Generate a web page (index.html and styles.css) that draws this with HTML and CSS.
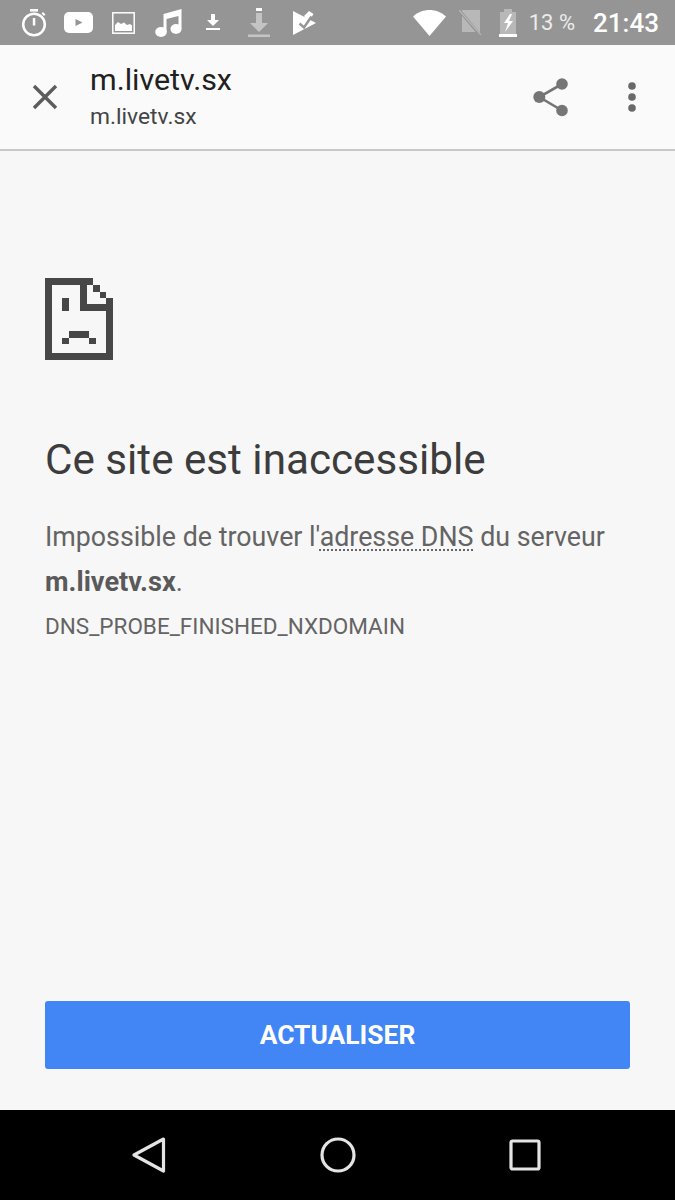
FILE: index.html
```html
<!DOCTYPE html>
<html lang="fr">
<head>
<meta charset="utf-8">
<title>m.livetv.sx</title>
<link rel="stylesheet" href="styles.css">
</head>
<body>
<div class="phone">
  <header class="status">
    <div class="status-left">
      <svg class="si i-timer" width="26" height="28" viewBox="0 0 26 28"><circle cx="13" cy="15.500" r="10.800" fill="none" stroke="#fff" stroke-width="2.500"/><rect x="9" y="0" width="8" height="2.600" fill="#fff"/><rect x="11.800" y="9" width="2.500" height="7.500" fill="#fff"/><path d="M22 3l2.500 2.500-1.500 1.500-2.500-2.500z" fill="#fff"/></svg>
      <svg class="si i-yt" width="29" height="21" viewBox="0 0 29 21"><rect width="29" height="21" rx="5" fill="#fff"/><path d="M11.500 7l7 3.500-7 3.500z" fill="#959595"/></svg>
      <svg class="si i-img" width="23" height="22" viewBox="0 0 23 22"><rect x="0.800" y="0.800" width="21.400" height="20.400" fill="none" stroke="#fff" stroke-width="1.500"/><path d="M3 19v-6l3-3 3 2 3-1.500 3 2.500 3-1 2 1.500V19z" fill="#fff"/></svg>
      <svg class="si i-music" width="27" height="28" viewBox="0 0 27 28"><path d="M8.500 5L26.500 0v20h-3V7L11.500 10v13h-3z" fill="#fff"/><ellipse cx="6" cy="23" rx="5.800" ry="5" fill="#fff"/><ellipse cx="21" cy="20" rx="5.500" ry="5" fill="#fff"/></svg>
      <svg class="si i-dl" width="14" height="16" viewBox="0 0 14 16"><path d="M5 0h4v6h4L7 12 1 6h4z" fill="#fff"/><rect x="0" y="14" width="14" height="2" fill="#fff"/></svg>
      <svg class="si i-dl2" width="22" height="29" viewBox="0 0 22 29"><rect x="8" y="0" width="6" height="3" fill="#fff"/><path d="M8 5h6v10h6L11 24 2 15h6z" fill="#c4c4c4"/><rect x="0" y="26.500" width="22" height="2.500" fill="#c4c4c4"/></svg>
      <svg class="si i-play" width="23" height="24" viewBox="0 0 23 24"><path d="M0 0l23 12L0 24z" fill="#fff"/><path d="M11 5L16 0l4.500 3-5 8z" fill="#fff"/><path d="M6.500 12.500l4.500 4 7.500-11" fill="none" stroke="#959595" stroke-width="2.400"/></svg>
    </div>
    <div class="status-right">
      <svg class="wifi" width="33" height="26" viewBox="0 0 33 26"><path d="M0 6.500C5 2 11 0 16.500 0S28 2 33 6.500L16.500 26z" fill="#fff"/></svg>
      <svg class="sim" width="23" height="25" viewBox="0 0 23 25"><path d="M3 0h13l5 0v22H3z" fill="#b8b8b8"/><path d="M0 0l21 25" stroke="#959595" stroke-width="3"/><path d="M0 0l22 25" stroke="#b8b8b8" stroke-width="1.200"/></svg>
      <svg class="bat" width="18" height="28" viewBox="0 0 18 28"><path d="M5 0h8v3h4v22H1V3h4z" fill="#b8b8b8"/><rect x="0" y="25" width="18" height="3" fill="#fff"/><path d="M11 5L5 14h4L6 23l8-11h-4l3-7z" fill="#fff"/></svg>
      <span class="pct">13 %</span>
      <span class="clock">21:43</span>
    </div>
  </header>
  <nav class="toolbar">
    <svg class="close" width="28" height="28" viewBox="0 0 28 28"><path d="M3 3l22 22M25 3L3 25" stroke="#5c5c5c" stroke-width="3.400" fill="none"/></svg>
    <div class="titles">
      <div class="title">m.livetv.sx</div>
      <div class="url">m.livetv.sx</div>
    </div>
    <svg class="share" width="36" height="40" viewBox="0 0 36 40"><path d="M29 7L6.300 20 29 33.500" stroke="#757575" stroke-width="2.600" fill="none"/><circle cx="29" cy="7" r="5.800" fill="#757575"/><circle cx="29" cy="33.500" r="5.800" fill="#757575"/><circle cx="6.300" cy="20" r="6" fill="#757575"/></svg>
    <svg class="more" width="10" height="32" viewBox="0 0 10 32"><circle cx="5" cy="5" r="3.800" fill="#696969"/><circle cx="5" cy="16" r="3.800" fill="#696969"/><circle cx="5" cy="27" r="3.800" fill="#696969"/></svg>
  </nav>
  <main class="page">
    <svg class="sad" width="68" height="82" viewBox="0 0 68 82" shape-rendering="crispEdges"><g fill="#474747">
      <path d="M0 0h48v7H7v68h54V20h7v62H0z"/>
      <path d="M35 0h7v26h26v7H35z"/>
      <rect x="48" y="7" width="6.500" height="6.500"/>
      <rect x="54.500" y="13.500" width="6.500" height="6.500"/>
      <rect x="17" y="20" width="6.500" height="13"/>
      <rect x="23.500" y="53" width="20.500" height="6.500"/>
      <rect x="17" y="59.500" width="6.500" height="6.500"/>
      <rect x="44" y="59.500" width="6.500" height="6.500"/>
    </g></svg>
    <h1 class="heading">Ce site est inaccessible</h1>
    <p class="desc">Impossible de trouver l'<span class="dns">adresse DNS</span> du serveur <strong>m.livetv.sx</strong>.</p>
    <div class="code">DNS_PROBE_FINISHED_NXDOMAIN</div>
    <button class="reload" type="button">ACTUALISER</button>
  </main>
  <footer class="navbar">
    <svg width="34" height="38" viewBox="0 0 34 38"><path d="M31.500 3L2 19l29.500 16z" fill="none" stroke="#e4e4e4" stroke-width="3.200" stroke-linejoin="round"/></svg>
    <svg width="36" height="36" viewBox="0 0 36 36"><circle cx="18" cy="18" r="16" fill="none" stroke="#e4e4e4" stroke-width="3.200"/></svg>
    <svg width="32" height="32" viewBox="0 0 32 32"><rect x="2" y="2" width="28" height="28" rx="1.500" fill="none" stroke="#e4e4e4" stroke-width="3.200"/></svg>
  </footer>
</div>
</body>
</html>
```
FILE: styles.css
```css
* { box-sizing: border-box; }
html, body { margin: 0; padding: 0; }
body { font-family: Roboto, "Liberation Sans", sans-serif; background: #f7f7f7; }
.phone { width: 675px; height: 1200px; display: flex; flex-direction: column; overflow: hidden; }

.status { height: 45px; flex: none; background: #959595; display: flex; align-items: center; justify-content: space-between; padding: 0 16px 0 21px; color: #fff; }
.status-left { display: flex; align-items: center; }
.status-right { display: flex; align-items: center; }
.si { display: block; }
.i-timer { margin-right: 17px; margin-top: 0; }
.i-yt { margin-right: 19px; }
.i-img { margin-right: 20px; }
.i-music { margin-right: 24px; margin-top: 1px; }
.i-dl { margin-right: 28px; margin-top: -1px; }
.i-dl2 { margin-right: 23px; }
.wifi { margin-right: 13px; }
.sim { margin-right: 17px; }
.bat { margin-right: 12px; }
.pct { font-size: 22px; color: #ececec; margin-right: 18px; }
.clock { font-size: 26px; font-weight: 500; }

.toolbar { height: 106px; flex: none; background: #fafafa; border-bottom: 2px solid #c8c8c8; display: flex; align-items: center; padding-left: 31px; padding-right: 38px; }
.close { margin-right: 31px; flex: none; }
.titles { flex: 1; }
.title { font-size: 30.400px; line-height: 34px; color: #212121; }
.url { font-size: 22.800px; line-height: 30px; margin-top: 5px; color: #444; }
.share { margin-right: 58px; margin-left: -3px; }

.page { flex: 1; background: #f7f7f7; padding: 127px 45px 41px; display: flex; flex-direction: column; }
.sad { display: block; flex: none; }
.heading { margin: 74px 0 0; font-size: 42.200px; line-height: 52px; font-weight: 400; color: #3c3c3c; }
.desc { margin: 29px 0 0; font-size: 26.800px; line-height: 45px; color: #646464; }
.desc strong { font-size: 27.200px; font-weight: 700; color: #5a5a5a; }
.dns { text-decoration: underline dotted #666 2px; text-underline-offset: 3px; }
.code { margin-top: 6px; font-size: 22.500px; line-height: 30px; color: #646464; }
.reload { margin-top: auto; height: 68px; width: 100%; border: 0; border-radius: 3px; background: #4285f4; color: #fff; font-family: inherit; font-size: 26.400px; font-weight: 700; }

.navbar { height: 90px; flex: none; background: #000; display: flex; align-items: center; justify-content: space-between; padding: 0 134px 0 132px; }
```
